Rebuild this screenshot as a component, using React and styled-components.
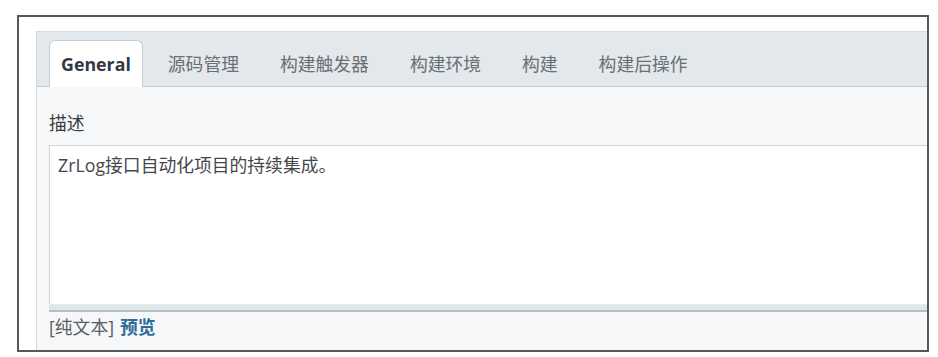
import React from 'react';
import styled, { createGlobalStyle } from 'styled-components';

const GlobalStyle = createGlobalStyle`
    html, body {
        margin: 0;
        padding: 0;
        background: #ffffff;
    }
    body {
        font-family: "Open Sans", "Noto Sans CJK SC", sans-serif;
    }
`;

const Frame = styled.div`
    box-sizing: border-box;
    display: flex;
    flex-direction: column;
    width: 912px;
    height: 337px;
    margin: 15px 0 0 17px;
    border: 2px solid #555759;
    background: #ffffff;
    overflow: hidden;
    padding: 14px 0 0 17px;
`;

const Panel = styled.div`
    flex: 1;
    width: 1000px;
    border-left: 1px solid #d5dbde;
    border-top: 1px solid #d5dbde;
    background: #f6f7f9;
`;

const TabBar = styled.div`
    display: flex;
    align-items: flex-end;
    height: 55px;
    box-sizing: border-box;
    padding: 0 0 0 12px;
    background: #e2e8eb;
    border-bottom: 1px solid #c3cbcf;
`;

const Tab = styled.div`
    box-sizing: border-box;
    height: ${p => (p.$active ? '47px' : '46px')};
    margin-right: ${p => (p.$active ? '11px' : '13px')};
    margin-bottom: ${p => (p.$active ? '-1px' : '0')};
    padding: 0 ${p => (p.$active ? '11px' : '13px')};
    display: flex;
    align-items: center;
    padding-bottom: ${p => (p.$active ? '0' : '1px')};
    font-size: 17.8px;
    color: ${p => (p.$active ? '#333840' : '#6b6f73')};
    font-weight: ${p => (p.$active ? 700 : 400)};
    background: ${p => (p.$active ? '#ffffff' : 'transparent')};
    border: 1px solid ${p => (p.$active ? '#c6ced2' : 'transparent')};
    border-bottom: none;
    border-radius: 6px 6px 0 0;
`;

const Body = styled.div`
    padding: 24px 0 0 12px;
`;

const Label = styled.div`
    font-size: 17.8px;
    color: #383b3e;
    line-height: 24px;
    margin-bottom: 10px;
`;

const TextBox = styled.div`
    box-sizing: border-box;
    height: 159px;
    padding: 7px 8px;
    background: #ffffff;
    border: 1px solid #cfd5d8;
    border-bottom: none;
    font-size: 17.8px;
    line-height: 24px;
    color: #45484b;
`;

const Handle = styled.div`
    height: 5px;
    background: #dfe6e8;
    border-top: 1px solid #e9edef;
    border-bottom: 2px solid #b5bec3;
`;

const Footer = styled.div`
    margin-top: 3px;
    font-size: 17.8px;
    line-height: 24px;
    color: #5a5e62;
`;

const PreviewLink = styled.a`
    color: #2b6b9a;
    font-weight: 700;
    text-decoration: none;
    margin-left: 6px;
`;

const tabs = ['General', '源码管理', '构建触发器', '构建环境', '构建', '构建后操作'];

export default function App() {
    return (
        <>
            <GlobalStyle />
            <Frame>
                <Panel>
                    <TabBar>
                        {tabs.map((t, i) => (
                            <Tab key={t} $active={i === 0}>{t}</Tab>
                        ))}
                    </TabBar>
                    <Body>
                        <Label>描述</Label>
                        <TextBox>ZrLog接口自动化项目的持续集成。</TextBox>
                        <Handle />
                        <Footer>
                            [纯文本]<PreviewLink href="#">预览</PreviewLink>
                        </Footer>
                    </Body>
                </Panel>
            </Frame>
        </>
    );
}
